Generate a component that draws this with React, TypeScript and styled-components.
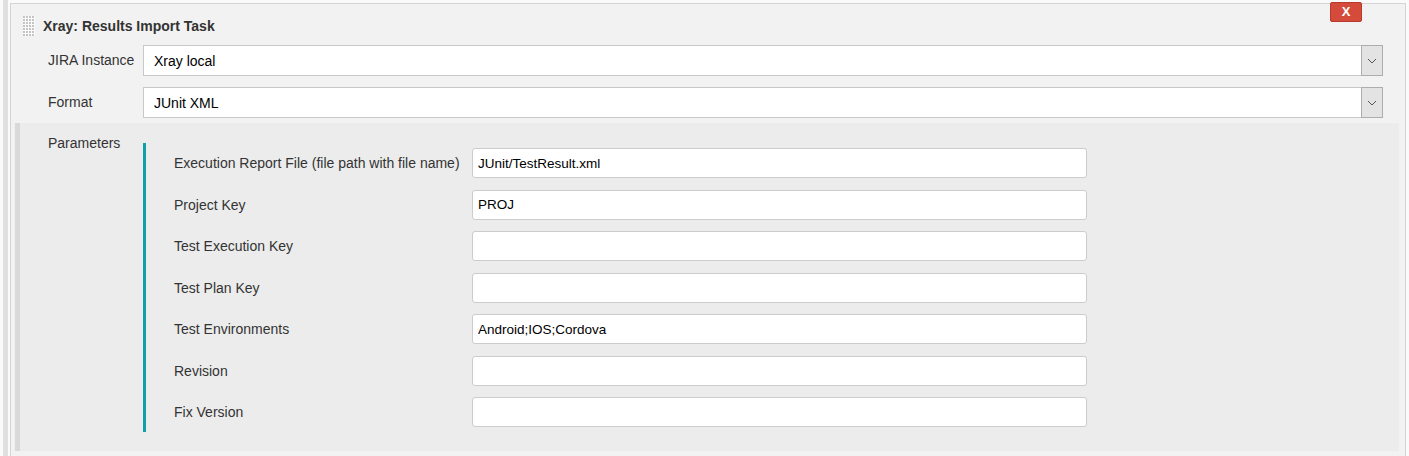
import styled, { createGlobalStyle } from 'styled-components';

const GlobalStyle = createGlobalStyle`
  html, body {
    margin: 0;
    padding: 0;
    background: #fafafa;
    font-family: "Liberation Sans", Arial, sans-serif;
    font-size: 14px;
    color: #333;
  }
`;

const params = [
  { label: 'Execution Report File (file path with file name)', value: 'JUnit/TestResult.xml' },
  { label: 'Project Key', value: 'PROJ' },
  { label: 'Test Execution Key', value: '' },
  { label: 'Test Plan Key', value: '' },
  { label: 'Test Environments', value: 'Android;IOS;Cordova' },
  { label: 'Revision', value: '' },
  { label: 'Fix Version', value: '' },
];

const Grip = () => {
  const dots = [];
  for (let r = 0; r < 7; r++) {
    for (let c = 0; c < 4; c++) {
      dots.push(<rect key={`${r}-${c}`} x={c * 3} y={r * 3} width="2" height="2" fill="#c4c4c4" />);
    }
  }
  return (
    <svg width="12" height="20" viewBox="0 0 12 20">
      <rect width="12" height="20" fill="#fbfbfb" />
      {dots}
    </svg>
  );
};

const Chevron = () => (
  <svg width="10" height="6" viewBox="0 0 10 6">
    <path d="M1 1 L5 5 L9 1" fill="none" stroke="#555" strokeWidth="1" />
  </svg>
);

export default function App() {
  return (
    <>
      <GlobalStyle />
      <Page>
        <Strip />
        <Panel>
          <CloseButton type="button">X</CloseButton>
          <Header>
            <Grip />
            <Title>Xray: Results Import Task</Title>
          </Header>

          <FieldRow>
            <FieldLabel>JIRA Instance</FieldLabel>
            <SelectBox>
              <SelectValue>Xray local</SelectValue>
              <ArrowBox>
                <Chevron />
              </ArrowBox>
            </SelectBox>
          </FieldRow>
          <FieldRow>
            <FieldLabel>Format</FieldLabel>
            <SelectBox>
              <SelectValue>JUnit XML</SelectValue>
              <ArrowBox>
                <Chevron />
              </ArrowBox>
            </SelectBox>
          </FieldRow>

          <ParamsBlock>
            <ParamsTitle>Parameters</ParamsTitle>
            <ParamsList>
              {params.map((p) => (
                <ParamRow key={p.label}>
                  <ParamLabel>{p.label}</ParamLabel>
                  <TextInput type="text" readOnly defaultValue={p.value} />
                </ParamRow>
              ))}
            </ParamsList>
          </ParamsBlock>
        </Panel>
      </Page>
    </>
  );
}

const Page = styled.div`
  display: flex;
  height: 456px;
  overflow: hidden;
  padding-left: 3px;
  padding-right: 3px;
  box-sizing: border-box;
`;

const Strip = styled.div`
  width: 5px;
  margin-right: 2px;
  background: #e0e0e0;
`;

const Panel = styled.div`
  position: relative;
  flex: 1;
  margin-top: 3px;
  border: 1px solid #d4d4d4;
  border-bottom: none;
  background: #f2f2f2;
  padding: 0 22px 0 37px;
`;

const CloseButton = styled.button`
  position: absolute;
  top: -2px;
  right: 43px;
  width: 32px;
  height: 20px;
  padding: 0;
  border: 1px solid #b83a2c;
  border-radius: 2px;
  background: #d44b3c;
  color: #fff;
  font-family: "Liberation Sans", Arial, sans-serif;
  font-weight: bold;
  font-size: 13px;
  line-height: 18px;
  text-align: center;
`;

const Header = styled.div`
  display: flex;
  align-items: center;
  gap: 8px;
  height: 41px;
  margin-left: -25px;
  padding-top: 2px;
  box-sizing: border-box;
`;

const Title = styled.h3`
  margin: 0;
  font-size: 14px;
  font-weight: bold;
  color: #333;
`;

const FieldRow = styled.div`
  display: flex;
  align-items: flex-start;
  margin-bottom: 11px;
`;

const FieldLabel = styled.label`
  display: block;
  width: 95px;
  flex-shrink: 0;
  padding-top: 7px;
  line-height: 16px;
  color: #333;
`;

const SelectBox = styled.div`
  flex: 1;
  display: flex;
  height: 31px;
  box-sizing: border-box;
  border: 1px solid #c8c8c8;
  background: #fff;
`;

const SelectValue = styled.span`
  flex: 1;
  padding-left: 10px;
  line-height: 30px;
  color: #000;
`;

const ArrowBox = styled.span`
  width: 20px;
  display: flex;
  align-items: center;
  justify-content: center;
  background: #e3e3e3;
  border: 1px solid #adadad;
  margin: -1px -1px -1px 0;
`;

const ParamsBlock = styled.div`
  display: flex;
  margin: -6px -16px 0 -33px;
  padding: 20px 0 19px 28px;
  border-left: 5px solid #d9d9d9;
  background: #ececec;
`;

const ParamsTitle = styled.label`
  display: block;
  width: 95px;
  flex-shrink: 0;
  margin-top: -8px;
  line-height: 16px;
  color: #333;
`;

const ParamsList = styled.div`
  display: flex;
  flex-direction: column;
  gap: 11.5px;
  padding: 5px 0 5px 28px;
  border-left: 3px solid #0fa0a8;
`;

const ParamRow = styled.div`
  display: flex;
  align-items: center;
`;

const ParamLabel = styled.label`
  width: 298px;
  flex-shrink: 0;
  color: #333;
`;

const TextInput = styled.input`
  width: 615px;
  height: 30px;
  box-sizing: border-box;
  border: 1px solid #cccccc;
  border-radius: 3px;
  padding: 0 5px;
  background: #fff;
  font-family: "Liberation Sans", Arial, sans-serif;
  font-size: 13.5px;
  color: #000;
  outline: none;
`;
